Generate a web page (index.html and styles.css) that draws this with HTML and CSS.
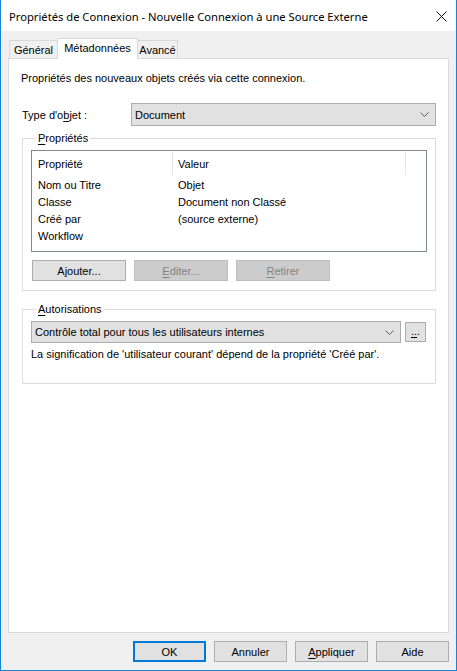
FILE: index.html
```html
<!DOCTYPE html>
<html lang="fr">
<head>
<meta charset="utf-8">
<title>Propriétés de Connexion</title>
<link rel="stylesheet" href="styles.css">
</head>
<body>
<div class="window">
  <div class="titlebar">
    <span class="title">Propriétés de Connexion - Nouvelle Connexion à une Source Externe</span>
    <svg class="close" width="11" height="11" viewBox="0 0 11 11"><path d="M0.5 0.5L10.5 10.5M10.5 0.5L0.5 10.5" stroke="#111" stroke-width="1" fill="none"/></svg>
  </div>
  <div class="client">
    <div class="tabs">
      <div class="tab tab-general">Général</div>
      <div class="tab tab-active">Métadonnées</div>
      <div class="tab tab-avance">Avancé</div>
    </div>
    <div class="panel">
      <p class="intro">Propriétés des nouveaux objets créés via cette connexion.</p>
      <div class="type-row">
        <span class="type-label">Type d'o<u>b</u>jet :</span>
        <div class="combo type-combo">
          <span class="combo-text">Document</span>
          <svg class="chevron" width="9" height="5" viewBox="0 0 9 5"><path d="M0.5 0.5L4.5 4.5L8.5 0.5" stroke="#606060" stroke-width="1" fill="none"/></svg>
        </div>
      </div>
      <fieldset class="group group-props">
        <legend class="group-label"><u>P</u>ropriétés</legend>
        <div class="listview">
          <div class="lv-header">
            <div class="lv-cell col1 sep">Propriété</div>
            <div class="lv-cell col2 sep">Valeur</div>
          </div>
          <div class="lv-row"><div class="lv-cell col1">Nom ou Titre</div><div class="lv-cell col2">Objet</div></div>
          <div class="lv-row"><div class="lv-cell col1">Classe</div><div class="lv-cell col2">Document non Classé</div></div>
          <div class="lv-row"><div class="lv-cell col1">Créé par</div><div class="lv-cell col2">(source externe)</div></div>
          <div class="lv-row"><div class="lv-cell col1">Workflow</div><div class="lv-cell col2"></div></div>
        </div>
        <div class="btn-row">
          <div class="btn btn-wide">A<u>j</u>outer...</div>
          <div class="btn btn-wide disabled"><u>E</u>diter...</div>
          <div class="btn btn-wide disabled"><u>R</u>etirer</div>
        </div>
      </fieldset>
      <fieldset class="group group-auth">
        <legend class="group-label"><u>A</u>utorisations</legend>
        <div class="auth-row">
          <div class="combo auth-combo">
            <span class="combo-text">Contrôle total pour tous les utilisateurs internes</span>
            <svg class="chevron" width="9" height="5" viewBox="0 0 9 5"><path d="M0.5 0.5L4.5 4.5L8.5 0.5" stroke="#606060" stroke-width="1" fill="none"/></svg>
          </div>
          <div class="btn btn-dots"><u>..</u>.</div>
        </div>
        <p class="note">La signification de 'utilisateur courant' dépend de la propriété 'Créé par'.</p>
      </fieldset>
    </div>
    <div class="footer">
      <div class="btn btn-foot btn-default">OK</div>
      <div class="btn btn-foot">Annuler</div>
      <div class="btn btn-foot"><u>A</u>ppliquer</div>
      <div class="btn btn-foot">Aide</div>
    </div>
  </div>
</div>
</body>
</html>
```
FILE: styles.css
```css
html, body {
  margin: 0;
  padding: 0;
}
body {
  width: 457px;
  height: 671px;
  overflow: hidden;
  font-family: "Liberation Sans", Arial, sans-serif;
  font-size: 11px;
  line-height: 15px;
  color: #000;
  background: #fff;
}
u { text-decoration: underline; text-underline-offset: 2px; }
p { margin: 0; }

.window {
  width: 457px;
  height: 671px;
  box-sizing: border-box;
  border: 1px solid #1883d7;
  border-top: none;
  display: flex;
  flex-direction: column;
}

.titlebar {
  height: 31px;
  flex: none;
  background: #fff;
  display: flex;
  align-items: center;
  justify-content: space-between;
  padding: 1px 9px 0 8px;
  box-sizing: border-box;
}
.title {
  font-family: "Noto Sans", "Open Sans", sans-serif;
  font-size: 11.2px;
  color: #000;
  white-space: nowrap;
}
.close { display: block; }

.client {
  flex: 1;
  background: #f0f0f0;
  display: flex;
  flex-direction: column;
}

.tabs {
  display: flex;
  align-items: flex-end;
  height: 20px;
  margin: 7px 0 0 8px;
  flex: none;
}
.tab {
  height: 18px;
  box-sizing: border-box;
  border: 1px solid #d9d9d9;
  border-bottom: none;
  background: #f0f0f0;
  text-align: center;
  line-height: 18px;
}
.tab-general { width: 48px; border-right: none; }
.tab-avance { width: 40px; border-left: none; }
.tab-active {
  width: 81px;
  height: 21px;
  margin-bottom: -1px;
  background: #fff;
  position: relative;
  z-index: 1;
  line-height: 19px;
}

.panel {
  flex: 1;
  margin: 0 7px;
  background: #fff;
  border: 1px solid #d9d9d9;
  padding: 12px 12px 0 13px;
}
.intro { margin-left: -1px; }

.type-row {
  display: flex;
  align-items: center;
  margin-top: 17px;
}
.type-label { width: 109px; flex: none; padding-top: 1px; }

.combo {
  box-sizing: border-box;
  background: #e1e1e1;
  border: 1px solid #adadad;
  display: flex;
  align-items: center;
  justify-content: space-between;
  padding: 1px 6px 0 3px;
}
.type-combo { flex: 1; height: 23px; }
.combo-text { white-space: nowrap; }
.chevron { display: block; margin-top: -1px; }

.group {
  margin: 5px 0 0 0;
  border: 1px solid #dcdcdc;
  padding: 0 8px 9px 8px;
  min-width: 0;
}
.group-label {
  padding: 0 2px;
  margin-left: 5px;
  line-height: 15px;
}

.listview {
  margin-top: 4px;
  height: 102px;
  box-sizing: border-box;
  border: 1px solid #828790;
  background: #fff;
}
.lv-header {
  display: flex;
  height: 25px;
  padding-top: 1px;
  box-sizing: border-box;
}
.lv-header .lv-cell {
  border-right: 1px solid #e5e5e5;
  height: 23px;
  line-height: 24px;
}
.lv-row {
  display: flex;
  height: 17px;
  line-height: 18px;
}
.lv-cell {
  box-sizing: border-box;
  white-space: nowrap;
}
.col1 { width: 141px; padding-left: 6px; }
.col2 { width: 233px; padding-left: 5px; }

.btn-row {
  display: flex;
  gap: 8px;
  margin: 8px 0 0 1px;
}
.btn {
  box-sizing: border-box;
  background: #e1e1e1;
  border: 1px solid #adadad;
  display: flex;
  align-items: center;
  justify-content: center;
  white-space: nowrap;
  padding-top: 1px;
}
.btn-wide { width: 94px; height: 21px; }
.btn.disabled {
  background: #cccccc;
  border-color: #bfbfbf;
  color: #838383;
}

.group-auth {
  margin-top: 11px;
  padding-bottom: 21px;
}
.auth-row {
  display: flex;
  align-items: center;
  gap: 4px;
  margin-top: 4px;
}
.auth-combo { width: 370px; height: 22px; flex: none; }
.btn-dots { width: 21px; height: 20px; padding: 0 0 1px 0; }
.note { margin-top: 3px; padding-top: 1px; }

.footer {
  height: 37px;
  flex: none;
  box-sizing: border-box;
  display: flex;
  justify-content: flex-end;
  align-items: flex-start;
  gap: 8px;
  padding: 8px 7px 0 0;
}
.btn-foot { width: 73px; height: 21px; }
.btn-default { border: 2px solid #0078d7; }
```
